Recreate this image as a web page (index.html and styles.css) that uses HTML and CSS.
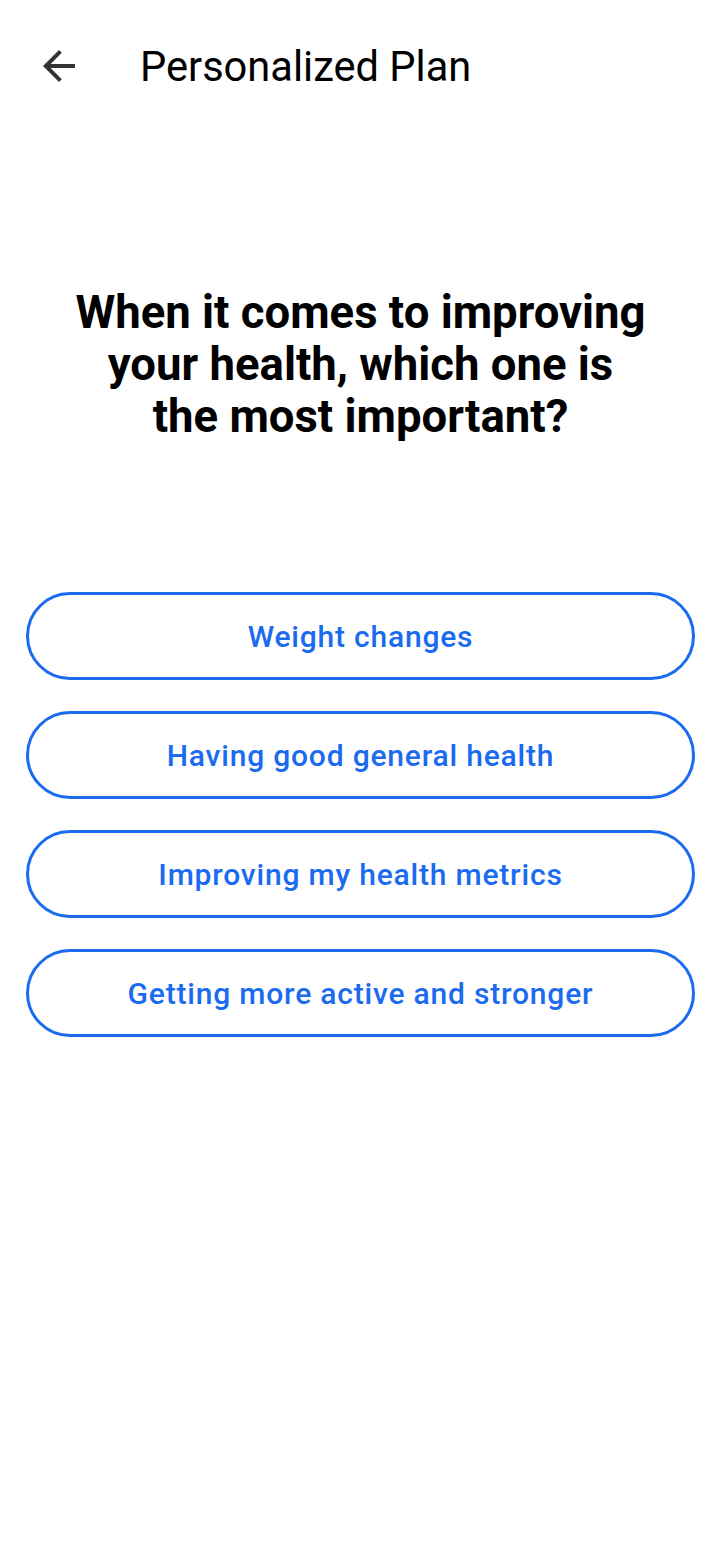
FILE: index.html
```html
<!DOCTYPE html>
<html lang="en">
<head>
    <meta charset="UTF-8">
    <meta name="viewport" content="width=device-width, initial-scale=1.0">
    <title>Personalized Plan</title>
    <link rel="stylesheet" href="styles.css">
</head>
<body>
    <header class="top-bar">
        <button class="back-button" aria-label="Back">
            <svg viewBox="0 0 24 24" width="48" height="48">
                <path d="M20 11H7.83l5.59-5.59L12 4l-8 8 8 8 1.41-1.41L7.83 13H20v-2z" fill="#333"/>
            </svg>
        </button>
        <h1 class="top-title">Personalized Plan</h1>
    </header>

    <main class="question">
        <h2 class="question-text">When it comes to improving your health, which one is the most important?</h2>

        <div class="options">
            <button class="option">Weight changes</button>
            <button class="option">Having good general health</button>
            <button class="option">Improving my health metrics</button>
            <button class="option">Getting more active and stronger</button>
        </div>
    </main>
</body>
</html>
```

FILE: styles.css
```css
body {
    margin: 0;
    background-color: #fff;
    font-family: Roboto, "Noto Sans", sans-serif;
    color: #000;
}

.top-bar {
    display: flex;
    align-items: center;
    height: 132px;
    padding-left: 35px;
}

.back-button {
    display: flex;
    padding: 0;
    border: none;
    background: none;
}

.top-title {
    margin: 0 0 0 57px;
    font-size: 41.6px;
    font-weight: 400;
}

.question {
    padding: 155px 33px 0 26px;
}

.question-text {
    margin: 0 auto;
    max-width: 576px;
    font-size: 45.5px;
    line-height: 52px;
    font-weight: 700;
    text-align: center;
}

.options {
    display: flex;
    flex-direction: column;
    gap: 31px;
    margin-top: 149px;
}

.option {
    height: 88px;
    border: 3.5px solid #1a6bf0;
    border-radius: 44px;
    background: #fff;
    color: #1a6bf0;
    font-family: Roboto, "Noto Sans", sans-serif;
    font-size: 30px;
    font-weight: 500;
    letter-spacing: 0.8px;
}
```
